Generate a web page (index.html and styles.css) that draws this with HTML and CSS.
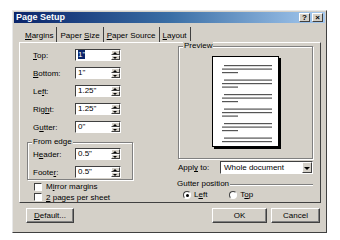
FILE: index.html
```html
<!DOCTYPE html>
<html>
<head>
<meta charset="utf-8">
<link rel="stylesheet" href="styles.css">
</head>
<body>
<div class="dialog">
  <div class="titlebar">
    <span class="title">Page Setup</span>
    <div class="tbtns"><span class="tbtn">?</span><span class="tbtn">×</span></div>
  </div>
  <div class="tabs">
    <span class="tab active"><u>M</u>argins</span>
    <span class="tab">Paper <u>S</u>ize</span>
    <span class="tab"><u>P</u>aper Source</span>
    <span class="tab"><u>L</u>ayout</span>
  </div>
  <div class="panel">
    <div class="left">
      <div class="row"><span class="lbl"><u>T</u>op:</span><div class="spin"><span class="val"><span class="sel">1"</span></span><span class="arrows"><i class="up"></i><i class="dn"></i></span></div></div>
      <div class="row"><span class="lbl"><u>B</u>ottom:</span><div class="spin"><span class="val">1"</span><span class="arrows"><i class="up"></i><i class="dn"></i></span></div></div>
      <div class="row"><span class="lbl">Le<u>f</u>t:</span><div class="spin"><span class="val">1.25"</span><span class="arrows"><i class="up"></i><i class="dn"></i></span></div></div>
      <div class="row"><span class="lbl">Rig<u>h</u>t:</span><div class="spin"><span class="val">1.25"</span><span class="arrows"><i class="up"></i><i class="dn"></i></span></div></div>
      <div class="row"><span class="lbl">G<u>u</u>tter:</span><div class="spin"><span class="val">0"</span><span class="arrows"><i class="up"></i><i class="dn"></i></span></div></div>
      <div class="group edge">
        <span class="glabel">From edge</span>
        <div class="row"><span class="lbl">H<u>e</u>ader:</span><div class="spin"><span class="val">0.5"</span><span class="arrows"><i class="up"></i><i class="dn"></i></span></div></div>
        <div class="row"><span class="lbl">Foote<u>r</u>:</span><div class="spin"><span class="val">0.5"</span><span class="arrows"><i class="up"></i><i class="dn"></i></span></div></div>
      </div>
      <div class="check"><span class="box"></span><span>M<u>i</u>rror margins</span></div>
      <div class="check"><span class="box"></span><span><u>2</u> pages per sheet</span></div>
    </div>
    <div class="right">
      <div class="group preview">
        <span class="glabel">Preview</span>
        <div class="page">
          <svg width="70" height="94" viewBox="0 0 70 94">
            <rect x="0.5" y="0.5" width="66" height="90" fill="#fff" stroke="#000" stroke-width="1"/>
            <rect x="67" y="2" width="2" height="91" fill="#000"/>
            <rect x="2" y="91" width="67" height="2" fill="#000"/>
            <g fill="#555">
              <rect x="12" y="9" width="48" height="1.2"/>
              <rect x="10" y="12.5" width="50" height="1.2"/>
              <rect x="10" y="16" width="16" height="1.2"/>
              <rect x="12" y="23.5" width="48" height="1.2"/>
              <rect x="10" y="27" width="50" height="1.2"/>
              <rect x="10" y="30.5" width="16" height="1.2"/>
              <rect x="12" y="38" width="48" height="1.2"/>
              <rect x="10" y="41.5" width="50" height="1.2"/>
              <rect x="10" y="45" width="16" height="1.2"/>
              <rect x="12" y="52.5" width="48" height="1.2"/>
              <rect x="10" y="56" width="50" height="1.2"/>
              <rect x="10" y="59.5" width="16" height="1.2"/>
              <rect x="12" y="67" width="48" height="1.2"/>
              <rect x="10" y="70.5" width="50" height="1.2"/>
              <rect x="10" y="74" width="16" height="1.2"/>
              <rect x="12" y="81.5" width="48" height="1.2"/>
              <rect x="10" y="85" width="50" height="1.2"/>
            </g>
          </svg>
        </div>
      </div>
      <div class="apply">
        <span class="lbl2">Appl<u>y</u> to:</span>
        <div class="select"><span class="val">Whole document</span><span class="drop"><i class="dn"></i></span></div>
      </div>
      <div class="group gutter">
        <span class="glabel">Gutter position</span>
        <div class="radios">
          <span class="radio"><span class="dot on"></span><span>L<u>e</u>ft</span></span>
          <span class="radio"><span class="dot"></span><span>T<u>o</u>p</span></span>
        </div>
      </div>
    </div>
  </div>
  <div class="footer">
    <span class="btn default"><u>D</u>efault...</span>
    <div class="okc">
      <span class="btn ok">OK</span>
      <span class="btn cancel">Cancel</span>
    </div>
  </div>
</div>
</body>
</html>
```
FILE: styles.css
```css
* { box-sizing: border-box; }
body {
  margin: 0;
  background: #fff;
  font-family: "Liberation Sans", Arial, sans-serif;
  font-size: 8px;
  color: #000;
}
u { text-decoration: underline; text-underline-offset: 1px; }
.dialog {
  margin: 10px 0 0 12px;
  width: 315px;
  height: 223px;
  background: #d4d0c8;
  border: 1px solid;
  border-color: #e8e8e8 #404040 #404040 #e8e8e8;
  padding: 1px;
  display: flex;
  flex-direction: column;
}
.titlebar {
  height: 11px;
  background: linear-gradient(90deg, #0a246a 0%, #3a6ea5 50%, #a6caf0 100%);
  display: flex;
  align-items: center;
  justify-content: space-between;
  padding: 0 2px 0 2px;
}
.title { color: #fff; font-weight: bold; font-size: 9px; line-height: 11px; }
.tbtns { display: flex; gap: 2px; }
.tbtn {
  width: 11px;
  height: 9px;
  background: #d4d0c8;
  border: 1px solid;
  border-color: #fff #404040 #404040 #fff;
  font-size: 8px;
  font-weight: bold;
  line-height: 7px;
  text-align: center;
}
.tabs {
  display: flex;
  margin: 4px 0 0 7px;
  height: 15px;
  align-items: stretch;
}
.tab {
  padding: 4px 3px 0 3px;
  border-right: 1px solid #404040;
  line-height: 10px;
}
.tab.active { padding-left: 4px; }
.panel {
  margin: 0 4px 0 5px;
  height: 161px;
  border: 1px solid;
  border-color: #fff #404040 #404040 #fff;
  display: flex;
  padding: 6px 7px 0 6px;
}
.left { width: 108px; display: flex; flex-direction: column; }
.row {
  display: flex;
  align-items: center;
  height: 12px;
  margin-bottom: 6px;
}
.lbl { width: 49px; padding-left: 7px; }
.spin {
  width: 46px;
  height: 12px;
  background: #fff;
  border: 1px solid;
  border-color: #404040 #fff #fff #404040;
  display: flex;
  justify-content: space-between;
}
.spin .val { padding-left: 2px; line-height: 10px; font-size: 8px; }
.sel { background: #0a246a; color: #fff; }
.arrows {
  width: 9px;
  display: flex;
  flex-direction: column;
  background: #d4d0c8;
}
.arrows i {
  flex: 1;
  border: 1px solid;
  border-color: #fff #404040 #404040 #fff;
  position: relative;
}
.up::after, .dn::after {
  content: "";
  position: absolute;
  left: 1px;
  border-left: 2.5px solid transparent;
  border-right: 2.5px solid transparent;
}
.up::after { top: 1px; border-bottom: 2px solid #000; }
.dn::after { top: 1px; border-top: 2px solid #000; }
.group {
  position: relative;
  border: 1px solid #808080;
  box-shadow: inset 1px 1px 0 #fff, 1px 1px 0 #fff;
}
.glabel {
  position: absolute;
  top: -6px;
  left: 4px;
  background: #d4d0c8;
  padding: 0 1px;
  line-height: 10px;
}
.edge {
  margin: 3px 0 0 1px;
  width: 106px;
  padding-top: 5px;
  height: 38px;
}
.edge .row { margin-bottom: 6px; }
.edge .lbl { width: 47px; padding-left: 5px; }
.check { display: flex; align-items: center; gap: 4px; padding-left: 8px; height: 10px; margin-top: 1px; }
.edge + .check { margin-top: 2px; }
.box {
  width: 8px;
  height: 8px;
  background: #fff;
  border: 1px solid;
  border-color: #404040 #fff #fff #404040;
}
.right { flex: 1; margin-left: 45px; display: flex; flex-direction: column; }
.preview {
  height: 116px;
  margin-top: -3px;
  padding: 9px 0 0 33px;
}
.page { width: 70px; height: 94px; }
.page svg { display: block; }
.apply { display: flex; align-items: center; margin-top: 2px; height: 13px; }
.lbl2 { width: 42px; }
.select {
  width: 93px;
  height: 13px;
  background: #fff;
  border: 1px solid;
  border-color: #404040 #fff #fff #404040;
  display: flex;
  justify-content: space-between;
}
.select .val { padding-left: 3px; line-height: 11px; }
.drop {
  width: 10px;
  position: relative;
  background: #d4d0c8;
  border: 1px solid;
  border-color: #fff #404040 #404040 #fff;
}
.drop .dn::after { top: 4px; left: 1px; border-top: 3px solid #000; border-left-width: 3px; border-right-width: 3px; }
.gutter {
  margin-top: 10px;
  border-left: none;
  border-right: none;
  border-bottom: none;
  box-shadow: inset 0 1px 0 #fff;
  height: 18px;
}
.gutter .glabel { left: -1px; padding-left: 0; }
.radios { display: flex; padding: 5px 0 0 5px; gap: 22px; }
.radio { display: flex; align-items: center; gap: 3px; line-height: 10px; }
.dot {
  width: 8px;
  height: 8px;
  border-radius: 50%;
  background: #fff;
  border: 1px solid;
  border-color: #404040 #fff #fff #404040;
  position: relative;
}
.dot.on::after {
  content: "";
  position: absolute;
  left: 1.5px; top: 1.5px;
  width: 3px; height: 3px;
  border-radius: 50%;
  background: #000;
}
.footer {
  display: flex;
  justify-content: space-between;
  padding: 5px 5px 0 12px;
}
.btn {
  height: 15px;
  border: 1px solid;
  border-color: #fff #404040 #404040 #fff;
  box-shadow: inset -1px -1px 0 #808080;
  text-align: center;
  line-height: 13px;
}
.default { width: 48px; }
.okc { display: flex; gap: 4px; }
.ok { width: 55px; }
.cancel { width: 49px; }
```
